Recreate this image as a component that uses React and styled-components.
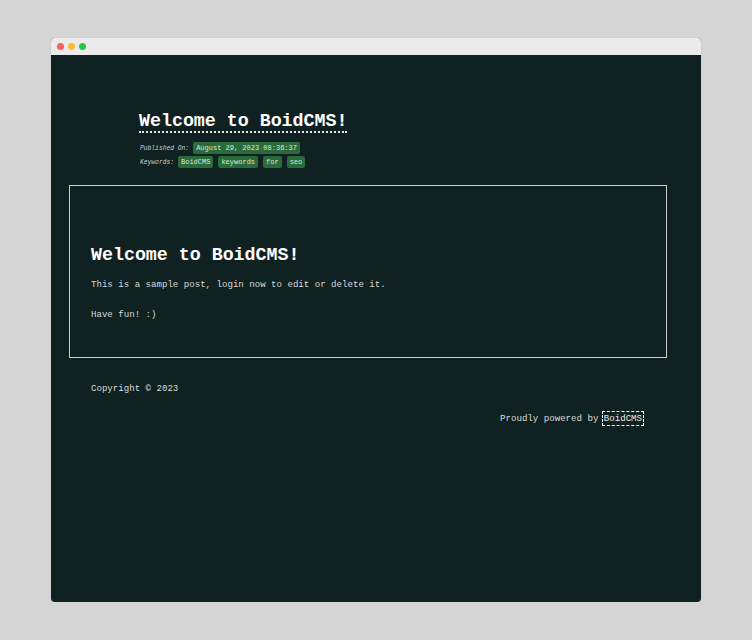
import React from "react";
import styled, {createGlobalStyle} from "styled-components";

const Global = createGlobalStyle`
  html, body {
    margin: 0;
    padding: 0;
    background: #d5d5d5;
  }
`

const Frame = styled.div`
  width: 650px;
  height: 564px;
  margin: 38px 0 0 51px;
  border-radius: 4px;
  overflow: hidden;
  display: flex;
  flex-direction: column;
  background: #102121;
  box-shadow: 0 1px 3px rgba(0, 0, 0, 0.08);
`
const TitleBar = styled.div`
  height: 17px;
  flex: none;
  background: #ebebeb;
  display: flex;
  align-items: center;
  gap: 4px;
  padding-left: 6px;
`
const Dot = styled.span`
  width: 7px;
  height: 7px;
  border-radius: 50%;
  background: ${p => p.color};
`
const Page = styled.div`
  flex: 1;
  padding: 0 34px 0 18px;
  font-family: "Liberation Mono", "Courier New", monospace;
  color: #dcdcdc;
`
const Header = styled.header`
  padding: 56px 0 0 70px;
  height: 130px;
  box-sizing: border-box;
`
const Title = styled.a`
  display: inline-block;
  font-size: 18.3px;
  font-weight: bold;
  line-height: 20px;
  color: #fff;
  text-decoration: none;
  border-bottom: 2px dotted #e8e8e8;
  margin-bottom: 9px;
`
const Meta = styled.div`
  display: flex;
  align-items: center;
  gap: 5px;
  font-size: 7px;
  margin-bottom: 2px;
  height: 12px;
`
const Label = styled.em`
  color: #cfcfcf;
  font-size: 6.3px;
  margin-left: 1px;
  margin-right: -1px;
`
const Tag = styled.span`
  background: #2a6a3b;
  color: #d8ecd8;
  padding: 2px 3px;
  border-radius: 2px;
  line-height: 8px;
`
const Post = styled.article`
  border: 1px solid #cdcdcd;
  height: 173px;
  box-sizing: border-box;
  padding: 57px 21px 0;
`
const PostTitle = styled.h1`
  margin: 0 0 12px;
  font-size: 18.3px;
  line-height: 24px;
  color: #fff;
`
const Para = styled.p`
  margin: 0 0 19px;
  font-size: 9.1px;
  line-height: 11px;
  color: #d8d8d8;
`
const Footer = styled.footer`
  padding: 25px 25px 0 22px;
  font-size: 9.1px;
  line-height: 11px;
`
const Powered = styled.p`
  margin: 19px 0 0;
  text-align: right;
`
const Link = styled.a`
  color: #e8e8e8;
  text-decoration: none;
  outline: 1px dashed #fff;
  outline-offset: 1px;
`

export default function App() {
  return (
    <>
      <Global/>
      <Frame>
        <TitleBar>
          <Dot color="#ff5f57"/>
          <Dot color="#febc2e"/>
          <Dot color="#28c840"/>
        </TitleBar>
        <Page>
          <Header>
            <Title href="#">Welcome to BoidCMS!</Title>
            <Meta>
              <Label>Published On:</Label>
              <Tag>August 29, 2023 08:36:37</Tag>
            </Meta>
            <Meta>
              <Label>Keywords:</Label>
              <Tag>BoidCMS</Tag>
              <Tag>keywords</Tag>
              <Tag>for</Tag>
              <Tag>seo</Tag>
            </Meta>
          </Header>
          <Post>
            <PostTitle>Welcome to BoidCMS!</PostTitle>
            <Para>This is a sample post, login now to edit or delete it.</Para>
            <Para>Have fun! :)</Para>
          </Post>
          <Footer>
            <div>Copyright © 2023</div>
            <Powered>Proudly powered by <Link href="#">BoidCMS</Link></Powered>
          </Footer>
        </Page>
      </Frame>
    </>
  )
}
